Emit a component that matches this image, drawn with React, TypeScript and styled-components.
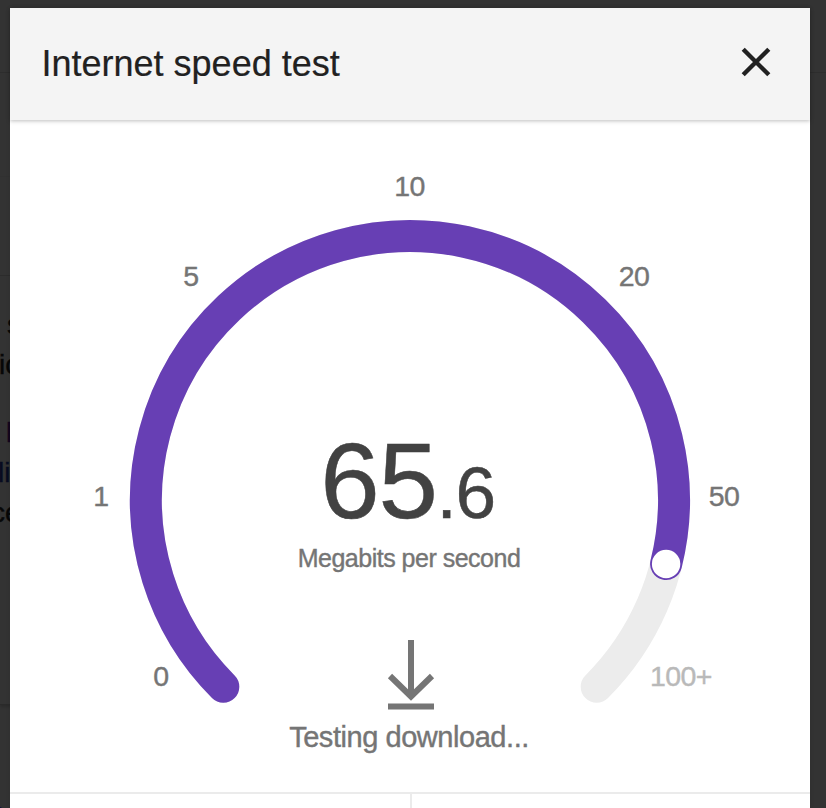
import React from "react";
import styled, { createGlobalStyle } from "styled-components";

const Global = createGlobalStyle`
  * { box-sizing: border-box; }
  body { margin: 0; background: #333; overflow: hidden; font-family: "Liberation Sans", Arial, sans-serif; }
`;

const Page = styled.div`
  position: relative;
  height: 808px;
  overflow: hidden;
  padding: 8px 16px 0 10px;
  background: #333;
`;

const Backdrop = styled.div`
  position: absolute;
  inset: 0;
  display: flex;
  flex-direction: column;
`;

const Band = styled.div<{ $h: number; $line?: string; $narrow?: boolean }>`
  width: ${(p) => (p.$narrow ? "50%" : "100%")};
  height: ${(p) => p.$h}px;
  flex: none;
  border-bottom: 1px solid ${(p) => p.$line ?? "#2d2d2d"};
`;

const Snippet = styled.div`
  width: 50%;
  height: 429px;
  flex: none;
  padding-top: 29px;
  border-bottom: 1px solid #2a2a2a;
  box-shadow: 0 2px 3px rgba(0, 0, 0, 0.18);
`;

const SnippetLine = styled.div<{ $x: number; $color?: string; $gap?: number }>`
  height: 40px;
  white-space: nowrap;
  font-size: 28px;
  line-height: 40px;
  text-indent: ${(p) => p.$x}px;
  margin-top: ${(p) => p.$gap ?? 0}px;
  color: ${(p) => p.$color ?? "#070707"};
  -webkit-text-stroke: 0.4px ${(p) => p.$color ?? "#070707"};
`;

const Visited = styled.div`
  height: 50px;
  margin-top: 84px;
  color: #140a4a;
  font-size: 36px;
  line-height: 50px;
  text-indent: -14px;
`;

const Dialog = styled.main`
  position: relative;
  height: 800px;
  display: flex;
  flex-direction: column;
  background: #fff;
  box-shadow: 0 0 4px rgba(0, 0, 0, 0.1);
`;

const Header = styled.header`
  flex: none;
  height: 112px;
  display: flex;
  align-items: center;
  justify-content: space-between;
  padding: 0 38px 0 31.5px;
  background: #f4f4f4;
  box-shadow: 0 1px 4px rgba(0, 0, 0, 0.26);
`;

const Title = styled.h1`
  margin: 0;
  font-size: 36px;
  font-weight: 400;
  line-height: 40px;
  color: #212121;
  -webkit-text-stroke: 0.2px #212121;
`;

const CloseButton = styled.button`
  display: flex;
  padding: 0;
  margin-top: -4px;
  border: 0;
  background: none;
`;

const Meter = styled.section`
  flex: none;
  height: 672px;
  display: grid;
  > * { grid-area: 1 / 1; }
`;

const Tick = styled.text<{ $muted?: boolean }>`
  font-size: 28.5px;
  text-anchor: middle;
  letter-spacing: -0.6px;
  fill: ${(p) => (p.$muted ? "#b9b9b9" : "#757575")};
  stroke: ${(p) => (p.$muted ? "#b9b9b9" : "#757575")};
  stroke-width: 0.4px;
`;

const Readout = styled.div`
  display: flex;
  flex-direction: column;
  align-items: center;
  padding: 301px 2px 0 0;
  color: #757575;
  -webkit-text-stroke: 0.4px #757575;
`;

const Speed = styled.div`
  margin-right: 3px;
  font-size: 107px;
  line-height: 120px;
  letter-spacing: -1.4px;
  color: #424242;
  -webkit-text-stroke: 0.5px #424242;
`;

const Decimal = styled.span`
  font-size: 73px;
`;

const Unit = styled.div`
  font-size: 25px;
  letter-spacing: -0.5px;
  line-height: 32px;
  margin-top: -11px;
`;

const DownloadIcon = styled.svg`
  margin: 66px 0 0 4px;
`;

const Status = styled.div`
  font-size: 29px;
  letter-spacing: -0.45px;
  line-height: 34px;
  margin-top: 10px;
`;

const Results = styled.footer`
  flex: 1;
  display: grid;
  grid-template-columns: 1fr 1fr;
  border-top: 2px solid #ebebeb;
`;

const ResultCell = styled.div`
  & + & { border-left: 2px solid #ebebeb; }
`;

const ticks = [
  { label: "0", x: 151, y: 566 },
  { label: "1", x: 91, y: 386 },
  { label: "5", x: 181, y: 166 },
  { label: "10", x: 399.5, y: 76 },
  { label: "20", x: 624, y: 166 },
  { label: "50", x: 714, y: 386 },
  { label: "100+", x: 671, y: 566, muted: true },
];

export default function App() {
  return (
    <>
      <Global />
      <Page>
        <Backdrop aria-hidden>
          <Band $h={73} />
          <Band $h={104} $line="#313131" $narrow />
          <Band $h={99} $narrow />
          <Snippet>
            <SnippetLine $x={7}>s</SnippetLine>
            <SnippetLine $x={-1}>ic</SnippetLine>
            <SnippetLine $x={6} $gap={28} $color="#12061d">l</SnippetLine>
            <SnippetLine $x={-2} $color="#070b20">li</SnippetLine>
            <SnippetLine $x={-9}>ce</SnippetLine>
          </Snippet>
          <Visited>e</Visited>
        </Backdrop>
        <Dialog>
          <Header>
            <Title>Internet speed test</Title>
            <CloseButton aria-label="Close">
              <svg width="32" height="32" viewBox="0 0 32 32" stroke="#212121" strokeWidth="4.4">
                <path d="M3.2 3.2 28.8 28.8M28.8 3.2 3.2 28.8" />
              </svg>
            </CloseButton>
          </Header>
          <Meter>
            <svg width="800" height="672" viewBox="0 0 800 672" fill="none">
              <path d="M213.3 566.7A264 264 0 1 1 586.7 566.7" stroke="#ececec" strokeWidth="32" strokeLinecap="round" />
              <path d="M213.3 566.7A264 264 0 1 1 656.1 444" stroke="#673fb4" strokeWidth="32" strokeLinecap="round" />
              <circle cx="656.1" cy="444" r="14.2" fill="#fff" />
              {ticks.map((t) => (
                <Tick key={t.label} x={t.x} y={t.y} $muted={t.muted}>{t.label}</Tick>
              ))}
            </svg>
            <Readout>
              <Speed>65<Decimal>.6</Decimal></Speed>
              <Unit>Megabits per second</Unit>
              <DownloadIcon width="48" height="70" viewBox="0 0 48 70" fill="none" stroke="#757575" strokeWidth="6">
                <path d="M24 0V56M3 36 24 56.5 45 36M1 66.5H47" />
              </DownloadIcon>
              <Status>Testing download...</Status>
            </Readout>
          </Meter>
          <Results>
            <ResultCell />
            <ResultCell />
          </Results>
        </Dialog>
      </Page>
    </>
  );
}
